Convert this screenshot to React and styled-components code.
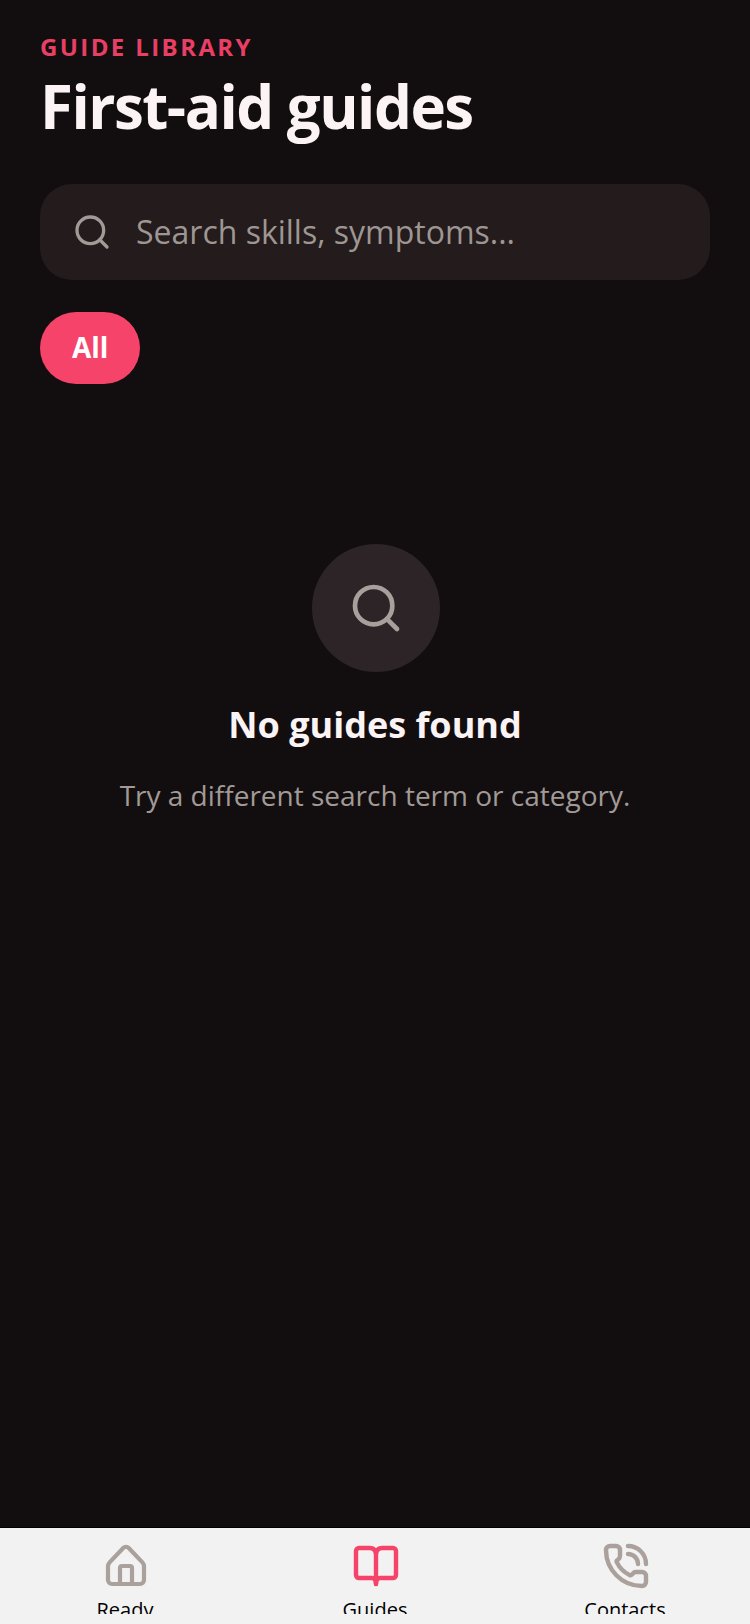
import React from 'react';
import styled, { createGlobalStyle } from 'styled-components';
import { Search, PhoneCall } from 'lucide-react';

const GlobalStyle = createGlobalStyle`
    html, body {
        margin: 0;
        padding: 0;
        background: #120e10;
    }
    * {
        box-sizing: border-box;
    }
`;

const HomeIcon = ({ size, color, strokeWidth, ...rest }) => (
    <svg {...rest} width={size} height={size} viewBox="0 0 48 48" fill="none" stroke={color} strokeWidth="4.2" strokeLinecap="round" strokeLinejoin="round">
        <path d="M21.500 5.800 7.600 20.400Q6 22.200 6 24.600V38a4 4 0 0 0 4 4h28a4 4 0 0 0 4-4V24.600q0-2.400-1.600-4.200L26.500 5.800a3.500 3.500 0 0 0-5 0Z" />
        <path d="M18 42V26a2 2 0 0 1 2-2h8a2 2 0 0 1 2 2v16" />
    </svg>
);

const BookIcon = ({ size, color, strokeWidth, ...rest }) => (
    <svg {...rest} width={size} height={size} viewBox="0 0 48 48" fill="none" stroke={color} strokeWidth="4.4" strokeLinecap="round" strokeLinejoin="round">
        <path d="M24 12C23.500 8 21 6 18 6H7a3 3 0 0 0-3 3v24a3 3 0 0 0 3 3h13c2.500 0 4 2 4 6 0-4 1.500-6 4-6h13a3 3 0 0 0 3-3V9a3 3 0 0 0-3-3H30c-3 0-5.500 2-6 6Z" />
        <path d="M24 12v30" />
    </svg>
);

const tabs = [
    { label: 'Ready', Icon: HomeIcon },
    { label: 'Guides', Icon: BookIcon, active: true },
    { label: 'Contacts', Icon: PhoneCall },
];

const App = () => (
    <Screen>
        <GlobalStyle />
        <Main>
            <Eyebrow>GUIDE LIBRARY</Eyebrow>
            <Title>First-aid guides</Title>
            <SearchBox>
                <Search size={40} strokeWidth={2} color="#a29a96" />
                <SearchInput placeholder="Search skills, symptoms..." />
            </SearchBox>
            <Filters>
                <FilterPill>All</FilterPill>
            </Filters>
            <Empty>
                <EmptyIcon>
                    <Search size={56} strokeWidth={2} color="#a8a09c" />
                </EmptyIcon>
                <EmptyTitle>No guides found</EmptyTitle>
                <EmptyText>Try a different search term or category.</EmptyText>
            </Empty>
        </Main>
        <TabBar>
            {tabs.map(({ label, Icon, active }) => (
                <Tab key={label}>
                    <TabIcon as={Icon} size={48} strokeWidth={2.2} color={active ? '#f5436a' : '#aaa19c'} />
                    <TabLabel>{label}</TabLabel>
                </Tab>
            ))}
        </TabBar>
    </Screen>
);

export default App;

const Screen = styled.div`
    width: 750px;
    height: 1624px;
    display: flex;
    flex-direction: column;
    overflow: hidden;
    background: #120e10;
    font-family: "Open Sans", sans-serif;
`;

const Main = styled.main`
    flex: 1;
    padding: 31px 40px 0;
`;

const Eyebrow = styled.div`
    font-size: 24px;
    line-height: 32px;
    font-weight: 700;
    letter-spacing: 2.4px;
    color: #e93f64;
`;

const Title = styled.h1`
    margin: 5px 0 0;
    font-size: 60px;
    line-height: 76px;
    font-weight: 700;
    letter-spacing: -1.5px;
    color: #fbf3f4;
`;

const SearchBox = styled.div`
    margin-top: 40px;
    height: 96px;
    padding: 0 32px;
    display: flex;
    align-items: center;
    gap: 24px;
    background: #231b1c;
    border-radius: 32px;
`;

const SearchInput = styled.input`
    flex: 1;
    min-width: 0;
    border: none;
    outline: none;
    padding: 0 0 2px;
    background: transparent;
    font-family: inherit;
    font-size: 32px;
    color: #fbf3f4;

    &::placeholder {
        color: #9e9692;
        opacity: 1;
    }
`;

const Filters = styled.div`
    margin-top: 32px;
    display: flex;
`;

const FilterPill = styled.button`
    height: 72px;
    padding: 0 32px 2px;
    border: none;
    border-radius: 36px;
    background: #f5436a;
    color: #fff;
    font-family: inherit;
    font-size: 28px;
    font-weight: 700;
`;

const Empty = styled.div`
    margin-top: 160px;
    display: flex;
    flex-direction: column;
    align-items: center;
`;

const EmptyIcon = styled.div`
    width: 128px;
    height: 128px;
    margin-left: 1px;
    border-radius: 50%;
    display: flex;
    align-items: center;
    justify-content: center;
    background: #2c2427;
`;

const EmptyTitle = styled.h2`
    margin: 29px 0 0;
    font-size: 36px;
    line-height: 48px;
    font-weight: 700;
    color: #fbf3f4;
`;

const EmptyText = styled.p`
    margin: 24px 0 0;
    font-size: 28px;
    line-height: 44px;
    color: #a29a96;
`;

const TabBar = styled.nav`
    flex: none;
    height: 97px;
    display: grid;
    grid-template-columns: repeat(3, 1fr);
    background: #f2f2f2;
    border-top: 1px solid #000;
`;

const Tab = styled.div`
    height: 86px;
    padding-top: 14px;
    display: flex;
    flex-direction: column;
    align-items: center;
    overflow: hidden;
`;

const TabIcon = styled.svg`
    flex: none;
    margin-left: 2px;
`;

const TabLabel = styled.span`
    margin-top: 6px;
    font-size: 20px;
    line-height: 28px;
    color: #000;
`;
